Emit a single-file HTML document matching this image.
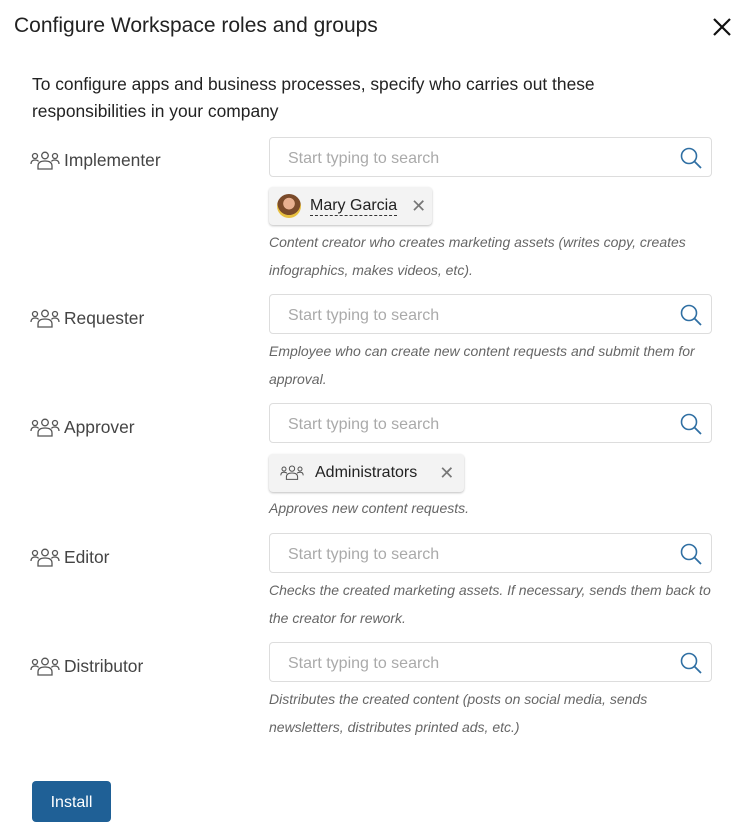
<!DOCTYPE html>
<html><head><style>
*{margin:0;padding:0;box-sizing:border-box}
body{width:736px;height:827px;background:#fff;font-family:"Liberation Sans",sans-serif;color:#222;position:relative;overflow:hidden}
.a{position:absolute}
.title{left:14px;top:14px;font-size:21px;color:#222}
.intro{left:32px;top:71px;font-size:17.4px;line-height:27px;width:640px;color:#222}
.lbl{left:30px;font-size:17.4px;color:#444;display:flex;align-items:center;gap:4px}
.inp{left:269px;width:443px;height:40px;border:1px solid #ddd;border-radius:4px;font-size:16px;color:#aaa;padding:0 0 0 18px;line-height:41px}
.inp svg{position:absolute;right:8px;top:8px}
.desc{left:269px;font-size:14px;font-style:italic;color:#666;line-height:27.5px;width:450px}
.chip{left:269px;height:38px;background:#f3f3f3;border-radius:4px;box-shadow:0 1px 2px rgba(0,0,0,.25);display:flex;align-items:center;font-size:16px;color:#222}
.x{color:#777;font-size:18px}
</style></head><body>
<div class="a title">Configure Workspace roles and groups</div>
<svg class="a" style="left:711px;top:16px" width="22" height="22" viewBox="0 0 22 22"><path d="M3 3L19 19M19 3L3 19" stroke="#111" stroke-width="2.2"/></svg>
<div class="a intro">To configure apps and business processes, specify who carries out these responsibilities in your company</div>

<svg width="0" height="0" style="position:absolute"><defs>
<symbol id="g" viewBox="0 0 30 20"><g fill="none" stroke="#555" stroke-width="1.3"><circle cx="5" cy="5" r="2.5"/><circle cx="15" cy="4.5" r="3.3"/><circle cx="25" cy="5" r="2.5"/><path d="M1 13c0-3 2-4 4-4s3 .5 3.5 1.5"/><path d="M29 13c0-3-2-4-4-4s-3 .5-3.5 1.5"/><path d="M8 18v-3c0-4 3-5 7-5s7 1 7 5v3z"/></g></symbol>
<symbol id="s" viewBox="0 0 24 24"><circle cx="10" cy="10" r="7.5" fill="none" stroke="#2f6fa3" stroke-width="1.6"/><path d="M15.5 15.5L22 22" stroke="#2f6fa3" stroke-width="1.8"/></symbol>
</defs></svg>

<div class="a lbl" style="top:150px"><svg width="30" height="20"><use href="#g"/></svg>Implementer</div>
<div class="a inp" style="top:137px">Start typing to search<svg width="24" height="24"><use href="#s"/></svg></div>
<div class="a chip" style="top:187px;width:163px"><span style="margin-left:8px;width:24px;height:24px;border-radius:50%;background:radial-gradient(circle at 50% 40%,#e8b090 0 30%,#7a4a2a 32% 60%,#e8c040 62%);display:inline-block"></span><span style="margin-left:9px;border-bottom:1px dashed #333;line-height:18px">Mary Garcia</span><span class="x" style="margin-left:14px">✕</span></div>
<div class="a desc" style="top:229px">Content creator who creates marketing assets (writes copy, creates infographics, makes videos, etc).</div>

<div class="a lbl" style="top:308px"><svg width="30" height="20"><use href="#g"/></svg>Requester</div>
<div class="a inp" style="top:294px">Start typing to search<svg width="24" height="24"><use href="#s"/></svg></div>
<div class="a desc" style="top:338px">Employee who can create new content requests and submit them for approval.</div>

<div class="a lbl" style="top:417px"><svg width="30" height="20"><use href="#g"/></svg>Approver</div>
<div class="a inp" style="top:403px">Start typing to search<svg width="24" height="24"><use href="#s"/></svg></div>
<div class="a chip" style="top:454px;width:195px"><svg style="margin-left:11px" width="24" height="16"><use href="#g"/></svg><span style="margin-left:11px">Administrators</span><span class="x" style="margin-left:22px">✕</span></div>
<div class="a desc" style="top:495px">Approves new content requests.</div>

<div class="a lbl" style="top:547px"><svg width="30" height="20"><use href="#g"/></svg>Editor</div>
<div class="a inp" style="top:533px">Start typing to search<svg width="24" height="24"><use href="#s"/></svg></div>
<div class="a desc" style="top:577px">Checks the created marketing assets. If necessary, sends them back to the creator for rework.</div>

<div class="a lbl" style="top:656px"><svg width="30" height="20"><use href="#g"/></svg>Distributor</div>
<div class="a inp" style="top:642px">Start typing to search<svg width="24" height="24"><use href="#s"/></svg></div>
<div class="a desc" style="top:686px">Distributes the created content (posts on social media, sends newsletters, distributes printed ads, etc.)</div>

<div class="a" style="left:32px;top:781px;width:79px;height:41px;background:#1f6096;border-radius:4px;color:#fff;font-size:16px;text-align:center;line-height:43px">Install</div>
</body></html>
